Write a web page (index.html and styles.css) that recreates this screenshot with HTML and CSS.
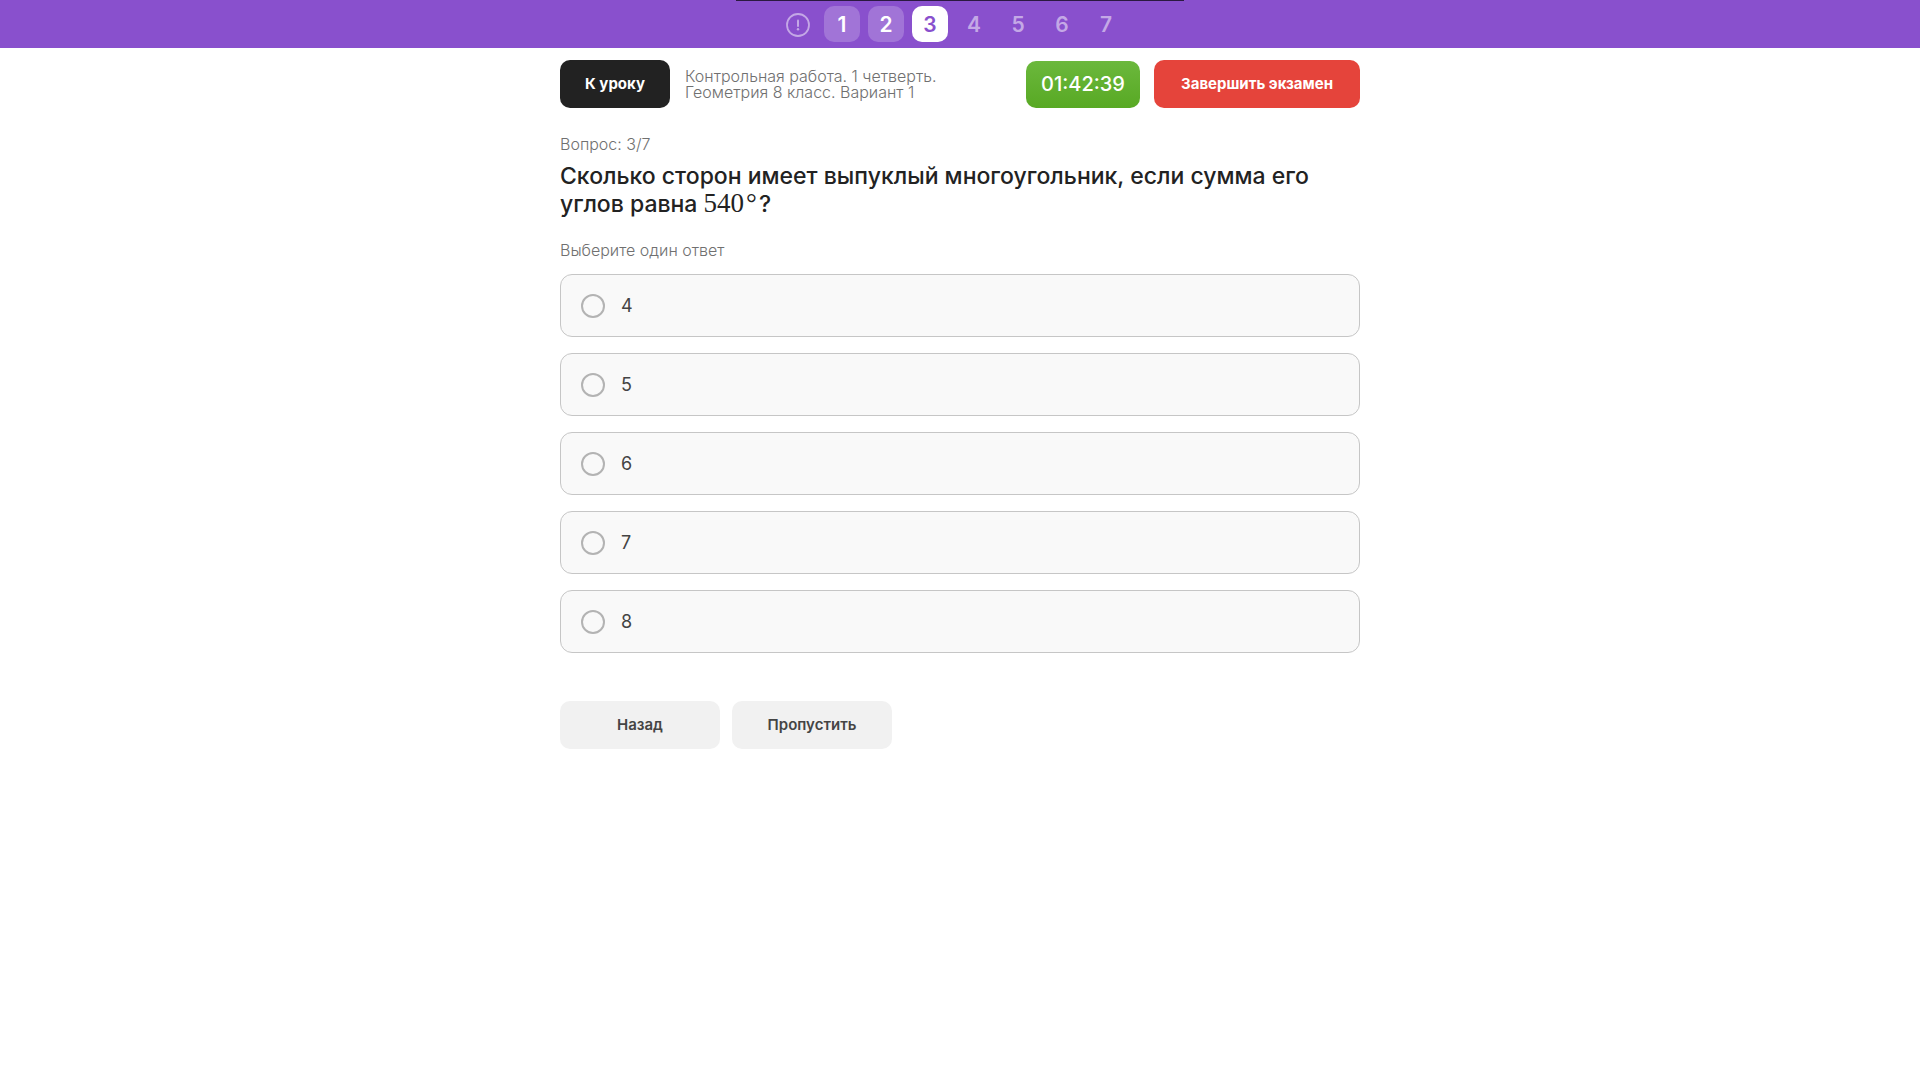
FILE: index.html
```
<!DOCTYPE html>
<html lang="ru">
<head>
  <meta charset="UTF-8">
  <meta name="viewport" content="width=device-width, initial-scale=1">
  <title>Контрольная работа. Геометрия 8 класс</title>
  <link rel="stylesheet" href="styles.css">
</head>
<body>
  <nav class="steps">
    <span class="top-line"></span>
    <a class="step" href="#info" aria-label="Информация">
      <svg width="24" height="24" viewBox="0 0 24 24" fill="none" stroke="currentColor" stroke-width="1.8">
        <circle cx="12" cy="12" r="11"/>
        <path d="M12 7.5v5.5" stroke-width="2" stroke-linecap="round"/>
        <circle cx="12" cy="16.3" r="1.2" fill="currentColor" stroke="none"/>
      </svg>
    </a>
    <a class="step done" href="#q1">1</a>
    <a class="step done" href="#q2">2</a>
    <a class="step current" href="#q3">3</a>
    <a class="step" href="#q4">4</a>
    <a class="step" href="#q5">5</a>
    <a class="step" href="#q6">6</a>
    <a class="step" href="#q7">7</a>
  </nav>

  <div class="container">
    <header class="exam-head">
      <button class="btn btn-dark" type="button">К уроку</button>
      <div class="exam-name">Контрольная работа. 1 четверть.<br>Геометрия 8 класс. Вариант 1</div>
      <div class="timer">01:42:39</div>
      <button class="btn btn-red" type="button">Завершить экзамен</button>
    </header>

    <main>
      <div class="note">Вопрос: 3/7</div>
      <h1 class="question">Сколько сторон имеет выпуклый многоугольник, если сумма его углов равна <span class="math">540<span class="degree">°</span></span>?</h1>

      <form>
        <fieldset class="options">
          <legend class="note">Выберите один ответ</legend>
          <label class="option"><input class="radio" type="radio" name="answer" value="4">4</label>
          <label class="option"><input class="radio" type="radio" name="answer" value="5">5</label>
          <label class="option"><input class="radio" type="radio" name="answer" value="6">6</label>
          <label class="option"><input class="radio" type="radio" name="answer" value="7">7</label>
          <label class="option"><input class="radio" type="radio" name="answer" value="8">8</label>
        </fieldset>
        <div class="actions">
          <button class="btn btn-grey" type="button">Назад</button>
          <button class="btn btn-grey" type="button">Пропустить</button>
        </div>
      </form>
    </main>
  </div>
</body>
</html>
```
FILE: styles.css
```
* {
  box-sizing: border-box;
}
body {
  margin: 0;
  background: #fff;
  color: #222;
  font-family: Inter, "Noto Sans", sans-serif;
}

/* question numbers */
.steps {
  position: relative;
  display: flex;
  justify-content: center;
  gap: 8px;
  padding: 6px 16px 6px 0;
  background: #8950cd;
}
.top-line {
  position: absolute;
  top: 0;
  left: 50%;
  width: 448px;
  height: 1px;
  margin-left: -224px;
  background: #2b1941;
}
.step {
  display: flex;
  align-items: center;
  justify-content: center;
  width: 36px;
  height: 36px;
  padding-top: 1px;
  border-radius: 10px;
  color: #c4a8e6;
  font-size: 21px;
  font-weight: 600;
  line-height: 24px;
  text-decoration: none;
}
.step.done {
  background: #a174d7;
  color: #fff;
}
.step.current {
  background: #fff;
  color: #8950cd;
}

.container {
  max-width: 832px;
  margin: 0 auto;
  padding: 12px 16px;
}
.exam-head {
  display: flex;
  align-items: center;
  margin-bottom: 24px;
}
.exam-name {
  flex: 1;
  margin-left: 15px;
  color: #707070;
  font-size: 16px;
  font-weight: 300;
  line-height: 16px;
}
.btn {
  height: 48px;
  padding: 0 20px 1px;
  border: none;
  border-radius: 10px;
  color: #fff;
  font-family: inherit;
  font-size: 15px;
  font-weight: 700;
  line-height: 20px;
  cursor: pointer;
}
.btn-dark {
  min-width: 110px;
  background: #222;
}
.btn-red {
  min-width: 206px;
  background: #e5443b;
}
.timer {
  min-width: 114px;
  margin: 1px 14px 0 0;
  border-radius: 10px;
  background: linear-gradient(#6bb83c, #58a924);
  color: #fff;
  font-size: 20px;
  font-weight: 500;
  line-height: 47px;
  text-align: center;
}

.note {
  padding: 0;
  color: #707070;
  font-size: 16px;
  font-weight: 300;
  line-height: 24px;
}
.question {
  margin: 6px 0 20px;
  font-size: 23px;
  font-weight: 500;
  line-height: 28px;
}
.math {
  font-family: "Liberation Serif", serif;
  font-size: 27px;
  font-weight: 400;
  line-height: 1;
}
.degree {
  margin: 0 2px;
}

.options {
  display: flex;
  flex-direction: column;
  gap: 16px;
  margin: 0;
  padding: 0;
  border: none;
}
.options legend {
  margin-bottom: 12px;
}
.option {
  display: flex;
  align-items: center;
  gap: 16px;
  height: 63px;
  padding: 0 20px;
  border: 1px solid #c6c6c6;
  border-radius: 12px;
  background: #f9f9f9;
  color: #444;
  font-size: 18px;
  cursor: pointer;
}
.radio {
  appearance: none;
  width: 24px;
  height: 24px;
  margin: 0;
  border: 2px solid #b3b3b3;
  border-radius: 50%;
}
.radio:checked {
  border: 7px solid #8950cd;
}
.actions {
  display: flex;
  gap: 12px;
  margin-top: 48px;
}
.btn-grey {
  min-width: 160px;
  background: #f1f1f1;
  color: #444;
  font-weight: 600;
}
```
